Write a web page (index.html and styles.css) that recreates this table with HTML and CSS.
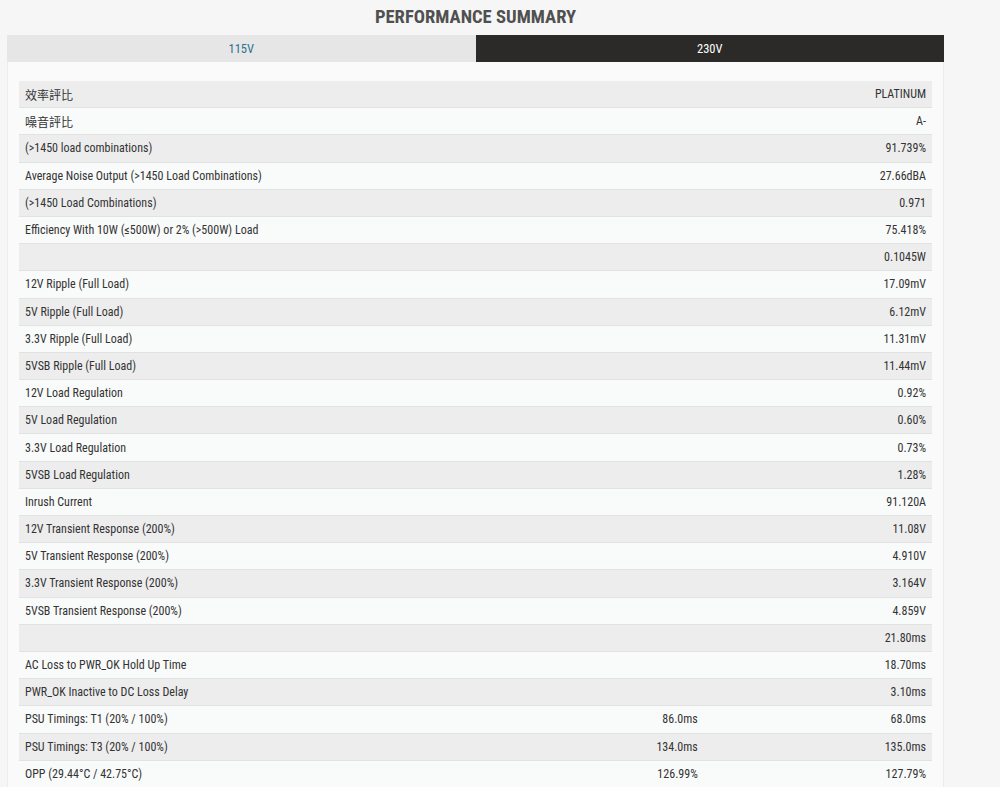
FILE: index.html
```html
<!DOCTYPE html>
<html lang="zh-Hant">
<head>
<meta charset="utf-8">
<title>Performance Summary</title>
<link rel="stylesheet" href="styles.css">
</head>
<body>
<div class="wrap">
  <h2 class="title">PERFORMANCE SUMMARY</h2>
  <div class="tabs">
    <div class="tab">115V</div>
    <div class="tab active">230V</div>
  </div>
  <div class="panel">
    <div class="table">
      <div class="row"><div class="c l">效率評比</div><div class="c v"></div><div class="c v">PLATINUM</div></div>
      <div class="row"><div class="c l">噪音評比</div><div class="c v"></div><div class="c v">A-</div></div>
      <div class="row"><div class="c l">(&gt;1450 load combinations)</div><div class="c v"></div><div class="c v">91.739%</div></div>
      <div class="row"><div class="c l">Average Noise Output (&gt;1450 Load Combinations)</div><div class="c v"></div><div class="c v">27.66dBA</div></div>
      <div class="row"><div class="c l">(&gt;1450 Load Combinations)</div><div class="c v"></div><div class="c v">0.971</div></div>
      <div class="row"><div class="c l">Efficiency With 10W (≤500W) or 2% (&gt;500W) Load</div><div class="c v"></div><div class="c v">75.418%</div></div>
      <div class="row"><div class="c l"></div><div class="c v"></div><div class="c v">0.1045W</div></div>
      <div class="row"><div class="c l">12V Ripple (Full Load)</div><div class="c v"></div><div class="c v">17.09mV</div></div>
      <div class="row"><div class="c l">5V Ripple (Full Load)</div><div class="c v"></div><div class="c v">6.12mV</div></div>
      <div class="row"><div class="c l">3.3V Ripple (Full Load)</div><div class="c v"></div><div class="c v">11.31mV</div></div>
      <div class="row"><div class="c l">5VSB Ripple (Full Load)</div><div class="c v"></div><div class="c v">11.44mV</div></div>
      <div class="row"><div class="c l">12V Load Regulation</div><div class="c v"></div><div class="c v">0.92%</div></div>
      <div class="row"><div class="c l">5V Load Regulation</div><div class="c v"></div><div class="c v">0.60%</div></div>
      <div class="row"><div class="c l">3.3V Load Regulation</div><div class="c v"></div><div class="c v">0.73%</div></div>
      <div class="row"><div class="c l">5VSB Load Regulation</div><div class="c v"></div><div class="c v">1.28%</div></div>
      <div class="row"><div class="c l">Inrush Current</div><div class="c v"></div><div class="c v">91.120A</div></div>
      <div class="row"><div class="c l">12V Transient Response (200%)</div><div class="c v"></div><div class="c v">11.08V</div></div>
      <div class="row"><div class="c l">5V Transient Response (200%)</div><div class="c v"></div><div class="c v">4.910V</div></div>
      <div class="row"><div class="c l">3.3V Transient Response (200%)</div><div class="c v"></div><div class="c v">3.164V</div></div>
      <div class="row"><div class="c l">5VSB Transient Response (200%)</div><div class="c v"></div><div class="c v">4.859V</div></div>
      <div class="row"><div class="c l"></div><div class="c v"></div><div class="c v">21.80ms</div></div>
      <div class="row"><div class="c l">AC Loss to PWR_OK Hold Up Time</div><div class="c v"></div><div class="c v">18.70ms</div></div>
      <div class="row"><div class="c l">PWR_OK Inactive to DC Loss Delay</div><div class="c v"></div><div class="c v">3.10ms</div></div>
      <div class="row"><div class="c l">PSU Timings: T1 (20% / 100%)</div><div class="c v">86.0ms</div><div class="c v">68.0ms</div></div>
      <div class="row"><div class="c l">PSU Timings: T3 (20% / 100%)</div><div class="c v">134.0ms</div><div class="c v">135.0ms</div></div>
      <div class="row"><div class="c l">OPP (29.44°C / 42.75°C)</div><div class="c v">126.99%</div><div class="c v">127.79%</div></div>
    </div>
  </div>
</div>
</body>
</html>
```

FILE: styles.css
```css
html, body {
  margin: 0;
  padding: 0;
  background: #f6f6f6;
}
body {
  font-family: "Roboto Condensed", "Liberation Sans Narrow", Roboto, "Noto Sans CJK TC", sans-serif;
  color: #333;
}
.wrap {
  width: 937px;
  margin-left: 7px;
}
.title {
  margin: 0;
  height: 35px;
  line-height: 35px;
  text-align: center;
  font-size: 18.6px;
  font-weight: 700;
  color: #505050;
}
.tabs {
  display: flex;
  height: 27px;
}
.tab {
  flex: 1;
  display: flex;
  align-items: center;
  justify-content: center;
  font-size: 12.5px;
  background: #e6e6e6;
  color: #2b7191;
}
.tab.active {
  background: #2c2a28;
  color: #fff;
}
.panel {
  background: #fafafa;
  border-left: 1px solid #ececec;
  border-right: 1px solid #ececec;
  padding: 19px 11px 0;
}
.table {
  display: flex;
  flex-direction: column;
}
.row {
  display: grid;
  grid-template-columns: 2fr 1fr 1fr;
  height: 27.2px;
  align-items: center;
  font-size: 12px;
  background: #f9fafa;
  border-bottom: 1px solid #e2e2e2;
  box-sizing: border-box;
}
.row:nth-child(odd) {
  background: #ededee;
}
.c {
  padding: 0 6px;
  white-space: nowrap;
}
.v {
  text-align: right;
}
```
